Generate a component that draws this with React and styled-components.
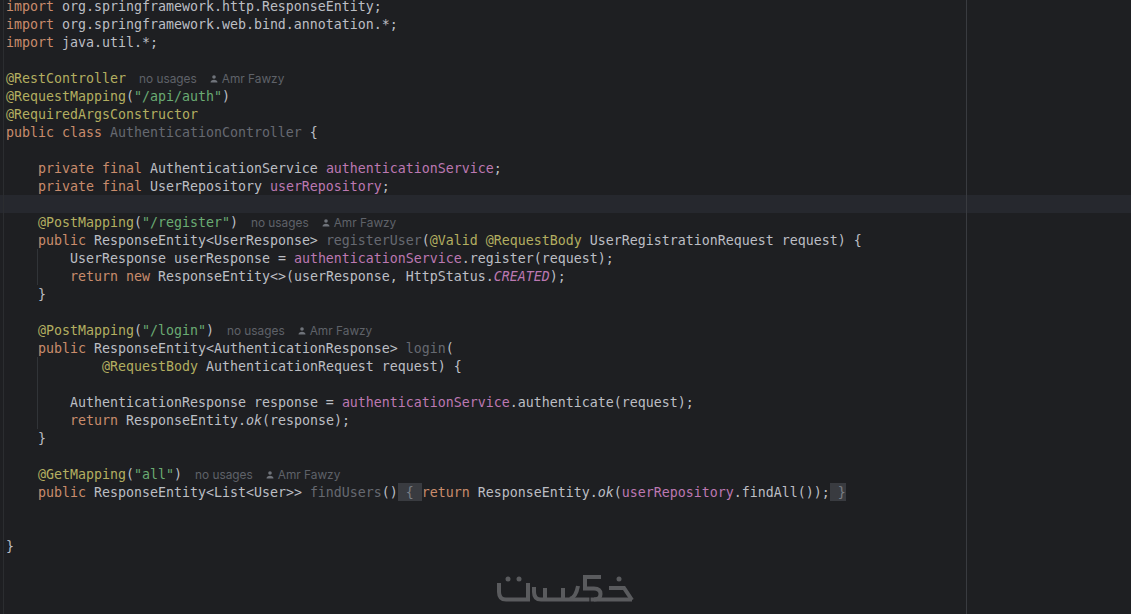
import React from 'react';
import styled, { createGlobalStyle } from 'styled-components';

const GlobalStyle = createGlobalStyle`
  html, body {
    margin: 0;
    height: 100%;
    background: #1e1f22;
  }
`;

const tokenColors = {
  plain: '#bcbec4',
  keyword: '#c98c6c',
  annotation: '#b3ae60',
  string: '#6aab73',
  field: '#bc78b2',
  unused: '#666971',
  fold: '#7a7e85',
};

const Editor = styled.div`
  position: relative;
  width: 1131px;
  height: 614px;
  overflow: hidden;
  background: #1e1f22;
`;

const GutterEdge = styled.div`
  position: absolute;
  top: 0;
  bottom: 0;
  left: 3px;
  width: 1px;
  background: #2b2d30;
`;

const RightMargin = styled.div`
  position: absolute;
  top: 0;
  bottom: 0;
  left: 966px;
  width: 1px;
  background: #393b40;
`;

const Code = styled.div`
  margin-top: -3px;
  font-family: "DejaVu Sans Mono", "Liberation Mono", monospace;
  font-size: 13.29px;
  line-height: 20px;
  color: ${tokenColors.plain};
`;

const Line = styled.div`
  position: relative;
  height: 18px;
  padding-left: ${props => 6 + props.indent * 32}px;
  white-space: pre;
  background: ${props => (props.current ? '#26282e' : 'transparent')};

  &::before {
    content: '';
    display: ${props => (props.guide ? 'block' : 'none')};
    position: absolute;
    top: 0;
    bottom: 0;
    left: 37px;
    width: 1px;
    background: #313438;
  }
`;

const Token = styled.span`
  color: ${props => tokenColors[props.kind]};
  font-style: ${props => (props.italic ? 'italic' : 'normal')};
`;

const Folded = styled.span`
  color: ${tokenColors.fold};
  background: #393b40;
  display: inline-block;
  height: 18px;
`;

const Hints = styled.span`
  display: inline-flex;
  align-items: center;
  height: 20px;
  margin-left: ${props => props.gap}px;
  vertical-align: top;
  font-family: Inter, "Noto Sans", sans-serif;
  font-size: 11.85px;
  color: #5f6269;
`;

const Author = styled.span`
  display: inline-flex;
  align-items: center;
  gap: 4px;
  margin-left: 13px;
`;

const Logo = styled.svg`
  position: absolute;
  left: 495px;
  top: 570px;
  width: 140px;
  height: 34px;
`;

const PersonIcon = () => (
  <svg width="8" height="8" viewBox="0 0 8 8" fill="#6f737a">
    <circle cx="4" cy="2" r="1.8" />
    <path d="M0.5 7.5C0.5 5.6 2.2 4.8 4 4.8S7.5 5.6 7.5 7.5Z" />
  </svg>
);

const Usages = ({ gap }) => (
  <Hints gap={gap}>
    no usages
    <Author>
      <PersonIcon />
      Amr Fawzy
    </Author>
  </Hints>
);

const K = ({ children }) => <Token kind="keyword">{children}</Token>;
const A = ({ children }) => <Token kind="annotation">{children}</Token>;
const S = ({ children }) => <Token kind="string">{children}</Token>;
const F = ({ children, italic }) => <Token kind="field" italic={italic}>{children}</Token>;
const U = ({ children }) => <Token kind="unused">{children}</Token>;
const I = ({ children }) => <Token kind="plain" italic>{children}</Token>;

const App = () => (
  <Editor>
    <GlobalStyle />
    <Code>
      <Line indent={0}><K>import</K> org.springframework.http.ResponseEntity;</Line>
      <Line indent={0}><K>import</K> org.springframework.web.bind.annotation.*;</Line>
      <Line indent={0}><K>import</K> java.util.*;</Line>
      <Line indent={0} />
      <Line indent={0}><A>@RestController</A><Usages gap={13} /></Line>
      <Line indent={0}><A>@RequestMapping</A>(<S>"/api/auth"</S>)</Line>
      <Line indent={0}><A>@RequiredArgsConstructor</A></Line>
      <Line indent={0}><K>public class</K> <U>AuthenticationController</U> {'{'}</Line>
      <Line indent={0} />
      <Line indent={1}><K>private final</K> AuthenticationService <F>authenticationService</F>;</Line>
      <Line indent={1}><K>private final</K> UserRepository <F>userRepository</F>;</Line>
      <Line indent={0} current />
      <Line indent={1}><A>@PostMapping</A>(<S>"/register"</S>)<Usages gap={13} /></Line>
      <Line indent={1}><K>public</K> ResponseEntity&lt;UserResponse&gt; <U>registerUser</U>(<A>@Valid</A> <A>@RequestBody</A> UserRegistrationRequest request) {'{'}</Line>
      <Line indent={2} guide>UserResponse userResponse = <F>authenticationService</F>.register(request);</Line>
      <Line indent={2} guide><K>return new</K> ResponseEntity&lt;&gt;(userResponse, HttpStatus.<F italic>CREATED</F>);</Line>
      <Line indent={1}>{'}'}</Line>
      <Line indent={0} />
      <Line indent={1}><A>@PostMapping</A>(<S>"/login"</S>)<Usages gap={13} /></Line>
      <Line indent={1}><K>public</K> ResponseEntity&lt;AuthenticationResponse&gt; <U>login</U>(</Line>
      <Line indent={3} guide><A>@RequestBody</A> AuthenticationRequest request) {'{'}</Line>
      <Line indent={0} guide />
      <Line indent={2} guide>AuthenticationResponse response = <F>authenticationService</F>.authenticate(request);</Line>
      <Line indent={2} guide><K>return</K> ResponseEntity.<I>ok</I>(response);</Line>
      <Line indent={1}>{'}'}</Line>
      <Line indent={0} />
      <Line indent={1}><A>@GetMapping</A>(<S>"all"</S>)<Usages gap={13} /></Line>
      <Line indent={1}><K>public</K> ResponseEntity&lt;List&lt;User&gt;&gt; <U>findUsers</U>()<Folded> {'{'} </Folded><K>return</K> ResponseEntity.<I>ok</I>(<F>userRepository</F>.findAll());<Folded> {'}'}</Folded></Line>
      <Line indent={0} />
      <Line indent={0} />
      <Line indent={0}>{'}'}</Line>
    </Code>
    <GutterEdge />
    <RightMargin />
    <Logo viewBox="495 570 140 34" fill="none" stroke="#5a5b5e" strokeWidth="4">
      <path d="M499 583V592Q499 599.500 506 599.500H528V583" />
      <path d="M534 587V592Q534 599.500 541 599.500H632" />
      <path d="M545 588V599M563 588V599" />
      <path d="M570 599Q576 597 578 586" />
      <path d="M601 577H585V588.500H594Q600.500 588.500 600.500 594Q600.500 599.500 594 599.500" />
      <path d="M590 591V602" stroke="#1e1f22" strokeWidth="1.2" />
      <path d="M609 588H624L632 600" />
      <circle cx="508" cy="579" r="2.5" fill="#5a5b5e" stroke="none" />
      <circle cx="519" cy="579" r="2.5" fill="#5a5b5e" stroke="none" />
      <circle cx="619" cy="579" r="2.5" fill="#5a5b5e" stroke="none" />
    </Logo>
  </Editor>
);

export default App;
